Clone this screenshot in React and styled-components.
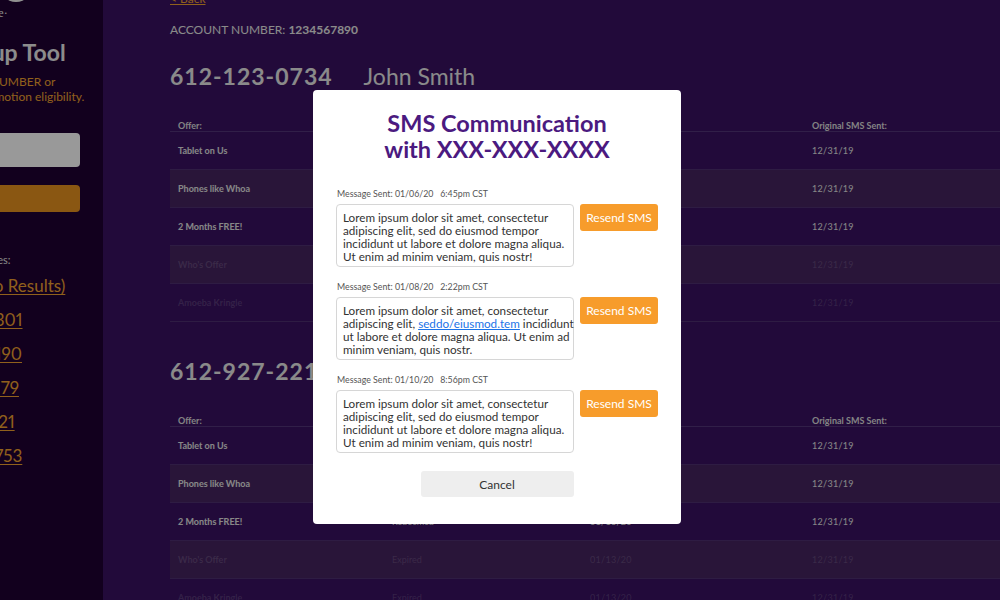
import React from 'react'
import styled, { createGlobalStyle } from 'styled-components'

const GlobalStyle = createGlobalStyle`
html, body {
  margin: 0;
  padding: 0;
  height: 100%;
  overflow: hidden;
}
body {
  font-family: Lato, "Noto Sans", sans-serif;
  background: #391261;
}
#root {
  height: 100%;
}
`

const Page = styled.div`
display: flex;
height: 100vh;
overflow: hidden;
background: #391261;
`

const Sidebar = styled.aside`
width: 103px;
flex-shrink: 0;
background: #1e0032;
overflow: hidden;
`

const SideInner = styled.div`
width: 212px;
margin-left: -132px;
margin-top: -30px;
display: flex;
flex-direction: column;
white-space: nowrap;
`

const Logo = styled.div`
display: flex;
align-items: flex-end;
height: 32px;
padding-left: 131px;
`

const LogoCircle = styled.div`
width: 34px;
height: 34px;
border-radius: 50%;
background: #f2f2f2;
`

const Tagline = styled.div`
font-family: "Liberation Serif", serif;
font-size: 12px;
color: #e8e8e8;
margin-top: 4px;
padding-left: 47px;
`

const SideTitle = styled.h1`
margin: 17px 0 0;
font-size: 23px;
line-height: 28px;
font-weight: 700;
color: #eaeaea;
`

const SideDesc = styled.p`
margin: 8px 0 0;
font-size: 12px;
line-height: 15px;
color: #f0a030;
`

const SearchInput = styled.div`
margin-top: 29px;
height: 34px;
border-radius: 4px;
background: #fff;
`

const SearchButton = styled.div`
margin-top: 18px;
height: 27px;
border-radius: 4px;
background: #e6921f;
`

const RecentLabel = styled.div`
margin: 41px 0 0 -15px;
font-size: 11px;
line-height: 14px;
color: #e0e0e0;
`

const RecentList = styled.div`
display: flex;
flex-direction: column;
align-items: flex-start;
gap: 14px;
margin-top: 9px;
padding-left: 51px;
font-variant-numeric: proportional-nums;
`

const RecentLink = styled.a`
font-size: 17px;
line-height: 20px;
color: #f0a030;
text-decoration: underline;
text-underline-offset: 2px;
`

const Main = styled.main`
flex: 1;
padding-left: 67px;
overflow: hidden;
color: #e6e6e6;
`

const Back = styled.a`
display: block;
width: fit-content;
margin-top: -8px;
font-size: 12px;
line-height: 14px;
color: #f0a030;
text-decoration: underline;
`

const Account = styled.div`
margin-top: 17px;
font-size: 12px;
line-height: 14px;
color: #e6e6e6;
b {
  font-weight: 700;
  letter-spacing: 0;
}
`

const Heading = styled.h2`
margin: 25px 0 29px;
display: flex;
font-size: 23px;
line-height: 28px;
font-weight: 400;
color: #e6e6e6;
`

const Phone = styled.span`
font-weight: 700;
letter-spacing: 1px;
margin-right: 31px;
`

const Table = styled.div`
width: 900px;
margin-bottom: 35px;
`

const HeadRow = styled.div`
display: grid;
grid-template-columns: 214px 198px 222px 1fr;
height: 12px;
align-items: center;
border-bottom: 1px solid #533578;
`

const HeadCell = styled.div`
padding-left: 8px;
font-size: 9px;
font-weight: 700;
color: #dcdcdc;
`

const Row = styled.div`
display: grid;
grid-template-columns: 214px 198px 222px 1fr;
height: 38px;
box-sizing: border-box;
align-items: center;
border-bottom: 1px solid #4d2f70;
background: ${p => (p.$alt ? '#45245f' : 'transparent')};
color: ${p => (p.$faded ? 'rgba(255,255,255,0.17)' : '#e2e2e2')};
`

const OfferCell = styled.div`
padding-left: 8px;
font-size: 9px;
font-weight: 700;
`

const Cell = styled.div`
padding-left: 8px;
font-size: 9px;
`

const DateCell = styled.div`
padding-left: 8px;
font-size: 9px;
letter-spacing: 0.3px;
`

const Overlay = styled.div`
position: fixed;
inset: 0;
background: rgba(0, 0, 0, 0.4);
display: flex;
align-items: center;
justify-content: center;
padding: 14px 6px 0 0;
`

const Modal = styled.div`
width: 368px;
box-sizing: border-box;
padding: 20px 23px 27px;
background: #fff;
border-radius: 4px;
display: flex;
flex-direction: column;
`

const ModalTitle = styled.h3`
margin: 0 0 26px;
text-align: center;
font-size: 23.5px;
line-height: 26px;
font-weight: 700;
color: #4b1a80;
`

const Message = styled.div`
margin-bottom: 14px;
`

const SentLabel = styled.div`
font-size: 8.8px;
line-height: 11px;
color: #555;
padding-left: 1px;
margin-bottom: 5px;
`

const MessageRow = styled.div`
display: flex;
gap: 6px;
align-items: flex-start;
`

const MessageBox = styled.div`
width: 238px;
height: 63px;
box-sizing: border-box;
padding: 6px 6px 5px;
border: 1px solid #d6d6d6;
border-radius: 4px;
font-size: 11.7px;
line-height: 13px;
color: #333;
white-space: nowrap;
a {
  color: #1a73e8;
  text-decoration: underline;
}
`

const ResendButton = styled.button`
width: 78px;
height: 27px;
border: none;
border-radius: 3px;
background: #f79c2b;
color: #fff;
font-family: inherit;
font-size: 12px;
padding: 0;
`

const CancelButton = styled.button`
align-self: center;
margin-top: 4px;
width: 153px;
height: 26px;
border: none;
border-radius: 3px;
background: #eeeeee;
color: #333;
font-family: inherit;
font-size: 12px;
padding: 0;
`

const recent = ['612555 (No Results)', '612-555-8301', '612-555-4190', '612-555-6179', '612-555-1121', '612-555-6753']

const sections = [
  {
    phone: '612-123-0734',
    name: 'John Smith',
    rows: [
      { offer: 'Tablet on Us', status: 'Available', date: '--', sent: '12/31/19' },
      { offer: 'Phones like Whoa', status: 'Available', date: '--', sent: '12/31/19' },
      { offer: '2 Months FREE!', status: 'Redeemed', date: '01/13/20', sent: '12/31/19' },
      { offer: "Who's Offer", status: 'Expired', date: '01/13/20', sent: '12/31/19', faded: true },
      { offer: 'Amoeba Kringle', status: 'Expired', date: '01/13/20', sent: '12/31/19', faded: true },
    ],
  },
  {
    phone: '612-927-2210',
    name: 'Jane Smith',
    rows: [
      { offer: 'Tablet on Us', status: 'Available', date: '--', sent: '12/31/19' },
      { offer: 'Phones like Whoa', status: 'Available', date: '--', sent: '12/31/19' },
      { offer: '2 Months FREE!', status: 'Redeemed', date: '01/13/20', sent: '12/31/19' },
      { offer: "Who's Offer", status: 'Expired', date: '01/13/20', sent: '12/31/19', faded: true },
      { offer: 'Amoeba Kringle', status: 'Expired', date: '01/13/20', sent: '12/31/19', faded: true },
    ],
  },
]

const messages = [
  {
    sent: 'Message Sent: 01/06/20\u00a0\u00a0 6:45pm CST',
    body: (
      <>
        Lorem ipsum dolor sit amet, consectetur<br />
        adipiscing elit, sed do eiusmod tempor<br />
        incididunt ut labore et dolore magna aliqua.<br />
        Ut enim ad minim veniam, quis nostr!
      </>
    ),
  },
  {
    sent: 'Message Sent: 01/08/20\u00a0\u00a0 2:22pm CST',
    body: (
      <>
        Lorem ipsum dolor sit amet, consectetur<br />
        adipiscing elit, <a href="#">seddo/eiusmod.tem</a> incididunt<br />
        ut labore et dolore magna aliqua. Ut enim ad<br />
        minim veniam, quis nostr.
      </>
    ),
  },
  {
    sent: 'Message Sent: 01/10/20\u00a0\u00a0 8:56pm CST',
    body: (
      <>
        Lorem ipsum dolor sit amet, consectetur<br />
        adipiscing elit, sed do eiusmod tempor<br />
        incididunt ut labore et dolore magna aliqua.<br />
        Ut enim ad minim veniam, quis nostr!
      </>
    ),
  },
]

const App = () => {
  return (
    <>
      <GlobalStyle />
      <Page>
        <Sidebar>
          <SideInner>
            <Logo>
              <LogoCircle />
            </Logo>
            <Tagline>Promo Finder Lite·</Tagline>
            <SideTitle>Promo Lookup Tool</SideTitle>
            <SideDesc>
              Please enter a PHONE NUMBER or
              <br />
              ACCOUNT to check promotion eligibility.
            </SideDesc>
            <SearchInput />
            <SearchButton />
            <RecentLabel>Recent Phone Number Searches:</RecentLabel>
            <RecentList>
              {recent.map(r => (
                <RecentLink key={r} href="#">{r}</RecentLink>
              ))}
            </RecentList>
          </SideInner>
        </Sidebar>

        <Main>
          <Back href="#">&lt; Back</Back>
          <Account>ACCOUNT NUMBER: <b>1234567890</b></Account>
          {sections.map(s => (
            <section key={s.phone}>
              <Heading>
                <Phone>{s.phone}</Phone>
                {s.name}
              </Heading>
              <Table>
                <HeadRow>
                  <HeadCell>Offer:</HeadCell>
                  <HeadCell>Status:</HeadCell>
                  <HeadCell>Redeemed:</HeadCell>
                  <HeadCell>Original SMS Sent:</HeadCell>
                </HeadRow>
                {s.rows.map((r, i) => (
                  <Row key={r.offer} $alt={i % 2 === 1} $faded={r.faded}>
                    <OfferCell>{r.offer}</OfferCell>
                    <Cell>{r.status}</Cell>
                    <DateCell>{r.date}</DateCell>
                    <DateCell>{r.sent}</DateCell>
                  </Row>
                ))}
              </Table>
            </section>
          ))}
        </Main>
      </Page>

      <Overlay>
        <Modal>
          <ModalTitle>
            SMS Communication
            <br />
            with XXX-XXX-XXXX
          </ModalTitle>
          {messages.map(m => (
            <Message key={m.sent}>
              <SentLabel>{m.sent}</SentLabel>
              <MessageRow>
                <MessageBox>{m.body}</MessageBox>
                <ResendButton>Resend SMS</ResendButton>
              </MessageRow>
            </Message>
          ))}
          <CancelButton>Cancel</CancelButton>
        </Modal>
      </Overlay>
    </>
  )
}

export default App
